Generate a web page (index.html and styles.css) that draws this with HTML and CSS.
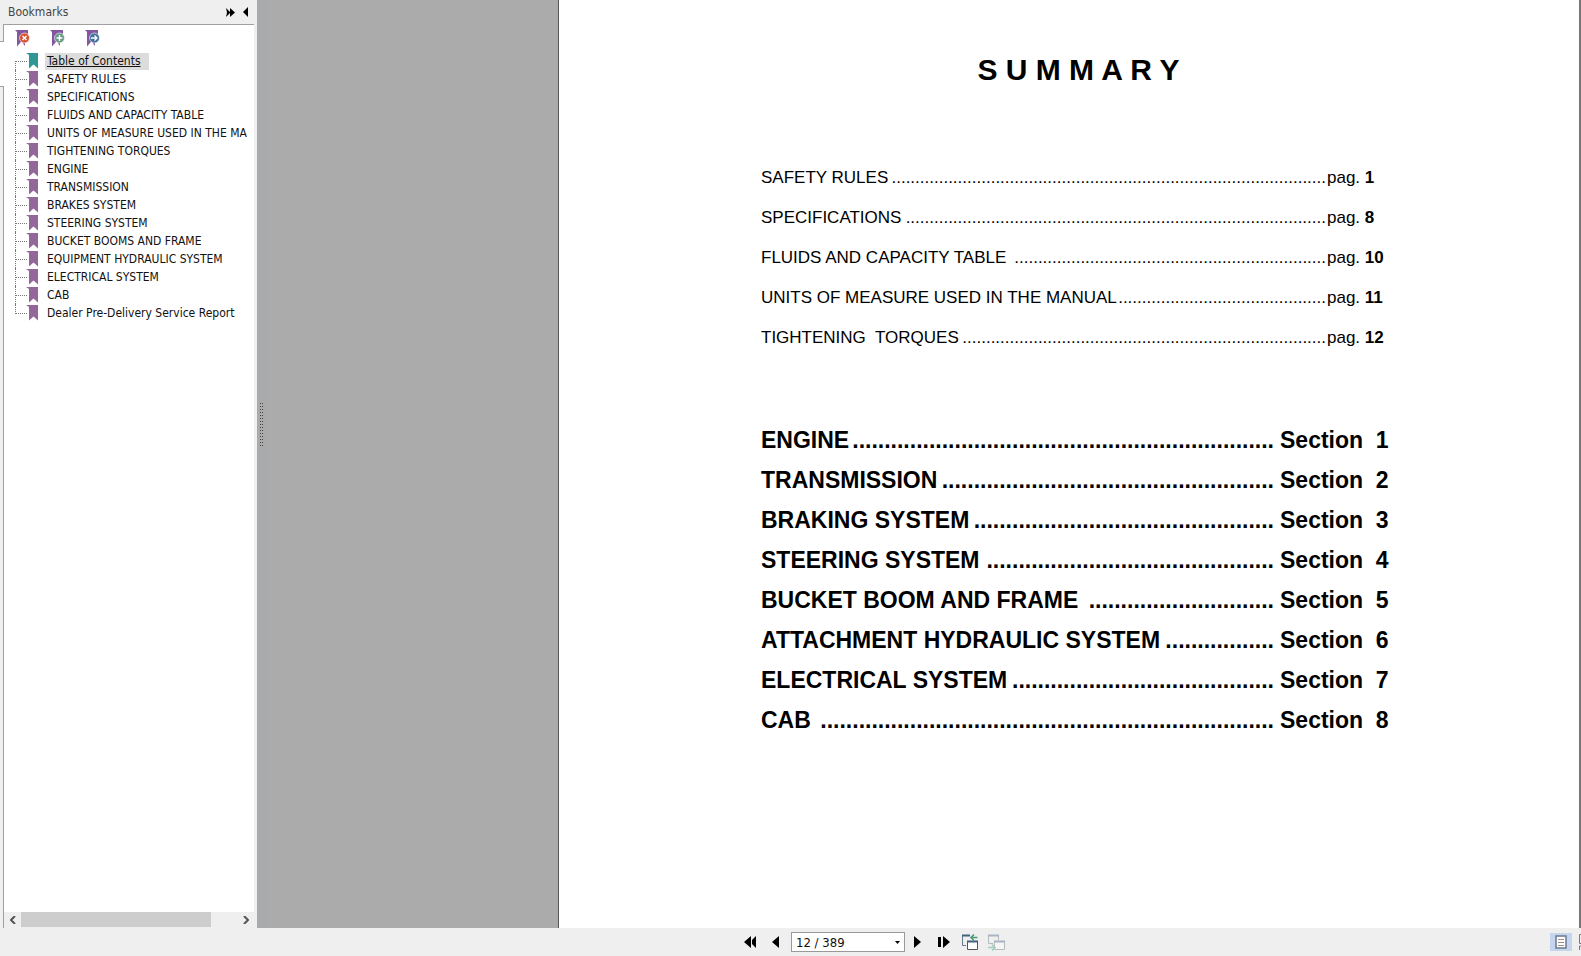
FILE: index.html
```html
<!DOCTYPE html>
<html lang="en">
<head>
    <meta charset="UTF-8">
    <meta name="viewport" content="width=device-width, initial-scale=1.0">
    <title>Bookmarks</title>
    <link rel="stylesheet" href="styles.css">
</head>
<body>
    <svg class="defs" aria-hidden="true">
        <symbol id="flag" viewBox="0 0 12 16">
            <path d="M0 0h12v15.500l-4.500-4-4.500 4V2z"/>
        </symbol>
        <symbol id="ribbon" viewBox="0 0 14 17">
            <path fill="#8257a0" d="M0 0h13v6H9L5.500 12.500 2 16.500V2z"/>
            <path fill="#8257a0" d="M7 12l3 4V13z"/>
        </symbol>
    </svg>
    <div class="workspace">
        <div class="side-tabs"><div class="side-tab"></div></div>
        <aside class="bookmarks">
            <div class="panel-head">
                <h2>Bookmarks</h2>
                <button type="button" class="head-btn" aria-label="Expand panel">
                    <svg width="9" height="9" viewBox="0 0 9 9"><path d="M0 0l4 4V0l5 4.500L4 9V5L0 9l1-4.500z"/></svg>
                </button>
                <button type="button" class="head-btn" aria-label="Collapse panel">
                    <svg width="6" height="10" viewBox="0 0 6 10"><path d="M5 0v10L0 5z"/></svg>
                </button>
            </div>
            <div class="panel-body">
                <div class="panel-tools">
                    <button type="button" aria-label="Delete bookmark">
                        <svg width="15" height="17" viewBox="0 0 15 17"><use href="#ribbon" width="14" height="17"/><circle cx="9.500" cy="8" r="5" fill="#d6532f" stroke="#fff" stroke-width=".6"/><path d="M7.500 6l4 4m0-4l-4 4" stroke="#fff" stroke-width="1.500"/></svg>
                    </button>
                    <button type="button" aria-label="Add bookmark">
                        <svg width="15" height="17" viewBox="0 0 15 17"><use href="#ribbon" width="14" height="17"/><circle cx="9.500" cy="8" r="5" fill="#669a83" stroke="#fff" stroke-width=".6"/><path d="M9.500 5v6m-3-3h6" stroke="#fff" stroke-width="1.500"/></svg>
                    </button>
                    <button type="button" aria-label="Go to bookmark">
                        <svg width="15" height="17" viewBox="0 0 15 17"><use href="#ribbon" width="14" height="17"/><circle cx="9.500" cy="8" r="5" fill="#41709d" stroke="#fff" stroke-width=".6"/><path d="M6 8h6M9.500 5.500L12 8l-2.500 2.500" fill="none" stroke="#fff" stroke-width="1.300"/></svg>
                    </button>
                </div>
                <ul class="tree">
                    <li class="active"><svg class="flag"><use href="#flag"/></svg><a href="#">Table of Contents</a></li>
                    <li><svg class="flag"><use href="#flag"/></svg><a href="#">SAFETY RULES</a></li>
                    <li><svg class="flag"><use href="#flag"/></svg><a href="#">SPECIFICATIONS</a></li>
                    <li><svg class="flag"><use href="#flag"/></svg><a href="#">FLUIDS AND CAPACITY TABLE</a></li>
                    <li><svg class="flag"><use href="#flag"/></svg><a href="#">UNITS OF MEASURE USED IN THE MA</a></li>
                    <li><svg class="flag"><use href="#flag"/></svg><a href="#">TIGHTENING TORQUES</a></li>
                    <li><svg class="flag"><use href="#flag"/></svg><a href="#">ENGINE</a></li>
                    <li><svg class="flag"><use href="#flag"/></svg><a href="#">TRANSMISSION</a></li>
                    <li><svg class="flag"><use href="#flag"/></svg><a href="#">BRAKES SYSTEM</a></li>
                    <li><svg class="flag"><use href="#flag"/></svg><a href="#">STEERING SYSTEM</a></li>
                    <li><svg class="flag"><use href="#flag"/></svg><a href="#">BUCKET BOOMS AND FRAME</a></li>
                    <li><svg class="flag"><use href="#flag"/></svg><a href="#">EQUIPMENT HYDRAULIC SYSTEM</a></li>
                    <li><svg class="flag"><use href="#flag"/></svg><a href="#">ELECTRICAL SYSTEM</a></li>
                    <li><svg class="flag"><use href="#flag"/></svg><a href="#">CAB</a></li>
                    <li><svg class="flag"><use href="#flag"/></svg><a href="#">Dealer Pre-Delivery Service Report</a></li>
                </ul>
                <div class="scrollbar">
                    <button type="button" aria-label="Scroll left"><svg width="6" height="8" viewBox="0 0 6 8"><path d="M5 0L1 4l4 4"/></svg></button>
                    <div class="track"><div class="thumb"></div></div>
                    <button type="button" aria-label="Scroll right"><svg width="6" height="8" viewBox="0 0 6 8"><path d="M1 0l4 4-4 4"/></svg></button>
                </div>
            </div>
        </aside>
        <div class="splitter"><div class="grip"></div></div>
        <main class="viewer">
            <article class="page">
                <h1>S U M M A R Y</h1>
                <ul class="toc">
                    <li><span>SAFETY RULES</span><span class="dots">............................................................................................</span><span class="ref">pag. <b>1</b></span></li>
                    <li><span>SPECIFICATIONS</span><span class="dots">.........................................................................................</span><span class="ref">pag. <b>8</b></span></li>
                    <li><span>FLUIDS AND CAPACITY TABLE</span><span class="dots">..................................................................</span><span class="ref">pag. <b>10</b></span></li>
                    <li><span>UNITS OF MEASURE USED IN THE MANUAL</span><span class="dots">............................................</span><span class="ref">pag. <b>11</b></span></li>
                    <li><span>TIGHTENING&nbsp; TORQUES</span><span class="dots">.............................................................................</span><span class="ref">pag. <b>12</b></span></li>
                </ul>
                <ul class="toc sections">
                    <li><span>ENGINE</span><span class="dots">..................................................................</span><span class="ref">Section&nbsp; 1</span></li>
                    <li><span>TRANSMISSION</span><span class="dots">....................................................</span><span class="ref">Section&nbsp; 2</span></li>
                    <li><span>BRAKING SYSTEM</span><span class="dots">...............................................</span><span class="ref">Section&nbsp; 3</span></li>
                    <li><span>STEERING SYSTEM</span><span class="dots">.............................................</span><span class="ref">Section&nbsp; 4</span></li>
                    <li><span>BUCKET BOOM AND FRAME</span><span class="dots">.............................</span><span class="ref">Section&nbsp; 5</span></li>
                    <li><span>ATTACHMENT HYDRAULIC SYSTEM</span><span class="dots">.................</span><span class="ref">Section&nbsp; 6</span></li>
                    <li><span>ELECTRICAL SYSTEM</span><span class="dots">.........................................</span><span class="ref">Section&nbsp; 7</span></li>
                    <li><span>CAB</span><span class="dots">.......................................................................</span><span class="ref">Section&nbsp; 8</span></li>
                </ul>
            </article>
        </main>
    </div>
    <footer class="statusbar">
        <nav class="pager">
            <button type="button" aria-label="First page"><svg width="14" height="14" viewBox="0 0 14 14"><path d="M8 1v12L1 7zM13 1v12l-4-4V5z"/></svg></button>
            <button type="button" aria-label="Previous page"><svg width="14" height="14" viewBox="0 0 14 14"><path d="M10 1v12L3 7z"/></svg></button>
            <div class="page-select">
                <select aria-label="Page"><option>12 / 389</option></select>
                <svg width="5" height="3" viewBox="0 0 5 3"><path d="M0 0h5L2.500 3z"/></svg>
            </div>
            <button type="button" aria-label="Next page"><svg width="14" height="14" viewBox="0 0 14 14"><path d="M3 1v12l7-6z"/></svg></button>
            <button type="button" aria-label="Last page"><svg width="14" height="14" viewBox="0 0 14 14"><path d="M6 1v12l7-6zM1 2h3v10H1z"/></svg></button>
            <button type="button" aria-label="Previous view">
                <svg width="17" height="17" viewBox="0 0 17 17" fill="none"><path d="M8 1.500H.5v10H4" stroke="#66798c"/><path d="M0 1.500h8" stroke="#41627f" stroke-width="2"/><path d="M5.500 7.500h10v8h-10z" fill="#fff" stroke="#555"/><path d="M5 7.500h11" stroke="#41627f" stroke-width="2"/><path d="M9 3.500h6.500M12 .5l-3 3 3 3" stroke="#4c9c7c" stroke-width="1.600"/></svg>
            </button>
            <button type="button" aria-label="Next view" disabled>
                <svg width="17" height="17" viewBox="0 0 17 17" fill="none"><path d="M5 9.500H.5v-8h10V6" stroke="#b4bac0"/><path d="M0 1.500h11" stroke="#a8b5c0" stroke-width="2"/><path d="M6.500 7.500h10v8h-10z" fill="#f6f6f6" stroke="#b9bcbf"/><path d="M6 7.500h11" stroke="#a8b5c0" stroke-width="2"/><path d="M0 13.500h7M4 10.500l3 3-3 3" stroke="#a9cdbd" stroke-width="1.600"/></svg>
            </button>
        </nav>
        <div class="view-modes">
            <button type="button" class="selected" aria-label="Single page">
                <svg width="12" height="14" viewBox="0 0 12 14" fill="none"><path d="M1 1h10v12H1z" fill="#fff" stroke="#6b7a8c" stroke-width="1.500"/><path d="M3 4.500h6M3 7.500h6M3 10.500h6" stroke="#9c8f8a"/></svg>
            </button>
            <button type="button" aria-label="Continuous">
                <svg width="12" height="16" viewBox="0 0 12 16" fill="none"><path d="M.5.5h11v9H.5zM.5 16v-4h11v4" stroke="#777"/></svg>
            </button>
        </div>
    </footer>
</body>
</html>
```
FILE: styles.css
```css
* {
    box-sizing: border-box;
}
body {
    margin: 0;
    height: 100vh;
    display: flex;
    flex-direction: column;
    overflow: hidden;
    background: #efefef;
    font-family: "DejaVu Sans Condensed", "DejaVu Sans", sans-serif;
    font-size: 12px;
    color: #111;
}
button {
    display: flex;
    align-items: center;
    justify-content: center;
    padding: 0;
    border: 0;
    background: transparent;
}
button svg {
    flex: none;
}
ul {
    list-style: none;
    margin: 0;
    padding: 0;
}
.defs {
    display: none;
}
.workspace {
    flex: 1;
    min-height: 0;
    display: flex;
}

/* bookmarks panel */
.side-tabs {
    width: 4px;
    padding-top: 24px;
    display: flex;
    flex-direction: column;
}
.side-tabs::before,
.side-tabs::after {
    content: "";
    border-right: 1px solid #a0a0a0;
}
.side-tabs::before {
    height: 17px;
}
.side-tabs::after {
    flex: 1;
}
.side-tab {
    height: 46px;
    background: #fff;
    border-top: 1px solid #a0a0a0;
    border-bottom: 1px solid #a0a0a0;
}
.bookmarks {
    width: 253px;
    padding-right: 3px;
    display: flex;
    flex-direction: column;
}
.panel-head {
    height: 24px;
    display: flex;
    align-items: center;
    padding-left: 4px;
}
.panel-head h2 {
    flex: 1;
    margin: 0;
    font-size: 12px;
    font-weight: normal;
    line-height: 24px;
    color: #444;
}
.head-btn {
    width: 16px;
    height: 16px;
}
.panel-body {
    flex: 1;
    min-height: 0;
    display: flex;
    flex-direction: column;
    background: #fff;
    border-top: 1px solid #a0a0a0;
}
.panel-tools {
    display: flex;
    gap: 20px;
    padding: 5px 0 5px 11px;
}
.tree {
    flex: 1;
    overflow: hidden;
    padding-left: 11px;
}
.tree li {
    height: 18px;
    display: flex;
    align-items: center;
    position: relative;
    padding-left: 11px;
    white-space: nowrap;
}
/* dotted connector lines */
.tree li::before {
    content: "";
    position: absolute;
    left: 0;
    top: 0;
    width: 11px;
    height: 9px;
    border-left: 1px dotted #777;
    border-bottom: 1px dotted #777;
}
.tree li::after {
    content: "";
    position: absolute;
    left: 0;
    top: 9px;
    height: 9px;
    border-left: 1px dotted #777;
}
.tree li:first-child::before {
    border-left-color: transparent;
}
.tree li:last-child::after {
    display: none;
}
.flag {
    width: 12px;
    height: 16px;
    flex: none;
    fill: #94679b;
}
.active .flag {
    fill: #2f9794;
}
.tree a {
    margin-left: 7px;
    padding: 0 2px;
    line-height: 17px;
    color: #111;
    text-decoration: none;
}
.tree .active a {
    padding-right: 8px;
    background: #dcdcdc;
    text-decoration: underline;
}
.scrollbar {
    height: 16px;
    display: flex;
    background: #efefef;
    padding-bottom: 1px;
}
.scrollbar button {
    width: 17px;
}
.scrollbar path {
    fill: none;
    stroke: #555;
    stroke-width: 2;
}
.track {
    flex: 1;
    display: flex;
}
.thumb {
    width: 88%;
    background: #cdcdcd;
}

.splitter {
    width: 9px;
    display: flex;
    align-items: center;
    justify-content: center;
    background: #a9aaac;
}
.grip {
    width: 3px;
    height: 44px;
    margin-bottom: 78px;
    background: repeating-linear-gradient(#444 0 1px, transparent 1px 3px);
}
.grip::before {
    content: "";
    display: block;
    width: 1px;
    height: 44px;
    margin: 0 auto;
    background: #a9aaac;
}

/* document */
.viewer {
    flex: 1;
    min-width: 0;
    display: flex;
    padding-left: 292px;
    background: #ababab;
}
.page {
    flex: 1;
    padding: 50px 20px 0 202px;
    background: #fff;
    border-left: 1px solid #555;
    border-right: 2px solid #777;
    color: #000;
    font-family: "Liberation Sans", Arial, sans-serif;
}
.page h1 {
    margin: 0;
    max-width: 635px;
    text-align: center;
    font-size: 30px;
    line-height: 40px;
}
.toc {
    max-width: 635px;
    margin-top: 68px;
    font-size: 17px;
    line-height: 40px;
}
.toc li {
    display: flex;
    white-space: nowrap;
}
.dots {
    flex: 1;
    text-align: right;
}
.ref {
    width: 70px;
    padding-left: 1px;
}
.sections {
    margin-top: 62px;
    font-size: 23px;
    font-weight: bold;
}
.sections .ref {
    width: 122px;
    padding-left: 6px;
}

/* status bar */
.statusbar {
    height: 28px;
    display: grid;
    grid-template-columns: 737fr auto 572fr;
    align-items: center;
}
.pager {
    grid-column: 2;
    display: flex;
    align-items: center;
}
.pager button {
    width: 26px;
    height: 22px;
}
.page-select {
    position: relative;
    margin-left: 2px;
}
.page-select select {
    display: block;
    width: 114px;
    height: 20px;
    padding: 0 4px;
    appearance: none;
    background: #fff;
    border: 1px solid #999;
    border-radius: 0;
    font-family: inherit;
    font-size: 13px;
    color: #111;
}
.page-select svg {
    position: absolute;
    right: 5px;
    top: 9px;
    pointer-events: none;
}
.view-modes {
    display: flex;
    justify-content: flex-end;
    gap: 7px;
    overflow: hidden;
}
.view-modes button {
    flex: none;
    height: 18px;
    width: 22px;
}
.view-modes button:last-child {
    width: 2px;
    overflow: hidden;
    justify-content: flex-start;
}
.view-modes .selected {
    background: #c5d5ee;
}
```
